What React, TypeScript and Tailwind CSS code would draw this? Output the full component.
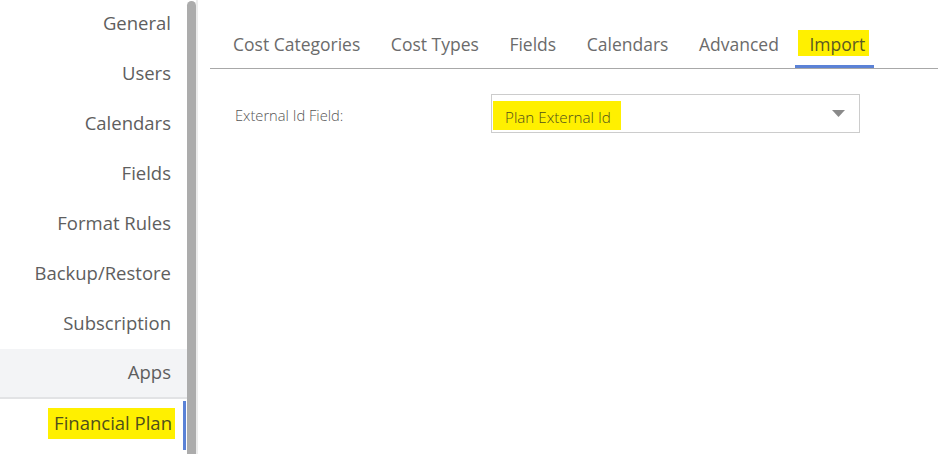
import React from "react";

const sideItems = [
  "General",
  "Users",
  "Calendars",
  "Fields",
  "Format Rules",
  "Backup/Restore",
  "Subscription",
  "Apps",
  "Financial Plan",
];

const tabs = ["Cost Categories", "Cost Types", "Fields", "Calendars", "Advanced", "Import"];

const App: React.FC = () => {
  return (
    <div className="flex w-[938px] h-[454px] overflow-hidden bg-white font-['Open_Sans',sans-serif]">
      {/* left menu */}
      <div className="w-[187px] shrink-0 flex flex-col -mt-[1px]">
        {sideItems.map((item) => {
          if (item === "Apps") {
            return (
              <div
                key={item}
                className="h-[50px] shrink-0 flex items-center justify-end pr-[16px] pb-[2px] text-[18.5px] text-[#5e5e5e] bg-[#f3f4f6] border-b-2 border-[#e2e3e5]"
              >
                {item}
              </div>
            );
          }
          if (item === "Financial Plan") {
            return (
              <div
                key={item}
                className="h-[49px] mt-[2px] mr-[1px] shrink-0 flex items-center justify-end pr-[8px] pb-[4px] text-[18.5px] border-r-[3px] border-[#5b82d6]"
              >
                <span className="bg-[#fff000] text-[#4f4f1c] pl-[6px] pr-[3px] pt-[1px] pb-[2px]">{item}</span>
              </div>
            );
          }
          return (
            <div
              key={item}
              className="h-[50px] shrink-0 flex items-center justify-end pr-[16px] pb-[3px] text-[18.5px] text-[#5e5e5e]"
            >
              {item}
            </div>
          );
        })}
      </div>

      {/* scrollbar */}
      <div className="w-[11px] shrink-0 flex">
        <div className="w-[9px] bg-[#acacac] rounded-t-[5px] mt-[1px]" />
        <div className="w-[2px] bg-[#ececec]" />
      </div>

      {/* main */}
      <div className="flex-1 pl-[12px] pt-[24px]">
        <div className="flex h-[45px] border-b border-[#a8a8a8] pl-[9px]">
          {tabs.map((t) => {
            if (t === "Import") {
              return (
                <div
                  key={t}
                  className="pl-[14px] pr-[9px] flex items-start pt-[6px] text-[17.5px] text-[#5a5a24] border-b-[3px] border-[#5b82d6]"
                >
                  <span className="bg-[#fff000] pl-[11px] pr-[4px] -ml-[11px] -mr-[4px] pt-[3px] pb-[1px] leading-[22px]">
                    {t}
                  </span>
                </div>
              );
            }
            return (
              <div
                key={t}
                className="px-[14px] mr-[2.6px] flex items-start pt-[9px] text-[17.5px] text-[#6b6b6b]"
              >
                <span className="leading-[22px]">{t}</span>
              </div>
            );
          })}
        </div>

        <div className="flex items-center mt-[25px] pl-[25px]">
          <div className="w-[256px] text-[14.7px] font-light text-[#555555] pt-[4px]">External Id Field:</div>
          <div className="w-[369px] h-[39px] border border-[#cccccc] flex items-center justify-between pl-[1px] pr-[14px]">
            <span className="bg-[#fff000] text-[#4f4f1c] text-[15.2px] font-light pl-[12px] pr-[10px] pt-[5px] pb-[1px] mt-[4px]">
              Plan External Id
            </span>
            <svg width="13" height="7" viewBox="0 0 13 7">
              <polygon points="0,0 13,0 6.5,7" fill="#8a8a8a" />
            </svg>
          </div>
        </div>
      </div>
    </div>
  );
};

export default App;
